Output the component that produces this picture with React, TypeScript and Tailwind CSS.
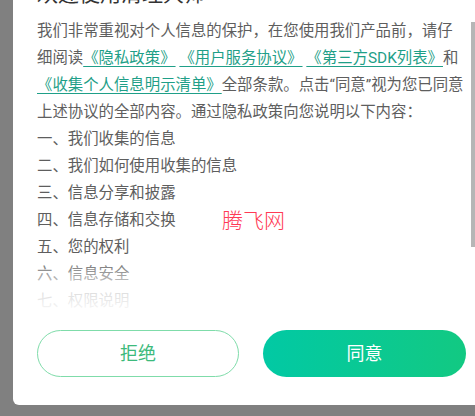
import React from "react";

const link = "text-[#1f9f88] underline decoration-[#1f9f88] underline-offset-[3px]";

export default function App() {
  const items = [
    "一、我们收集的信息",
    "二、我们如何使用收集的信息",
    "三、信息分享和披露",
    "四、信息存储和交换",
    "五、您的权利",
    "六、信息安全",
    "七、权限说明",
  ];
  return (
    <div
      className="w-[475px] h-[416px] bg-[#808080] overflow-hidden"
      style={{ fontFamily: 'Roboto, "Noto Sans CJK SC", sans-serif' }}
    >
      <div className="relative ml-[13px] w-[480px] h-[405px] bg-white rounded-bl-[6px] flex flex-col">
        <div className="relative h-[316px] overflow-hidden pl-[24px]">
          <div className="-mt-[20px] text-[21px] leading-[28px] text-[#333333] whitespace-nowrap">
            欢迎使用清理大师
          </div>
          <div className="mt-[10px] text-[15.4px] leading-[27px] text-[#5e5e5e] whitespace-nowrap">
            <div>我们非常重视对个人信息的保护，在您使用我们产品前，请仔</div>
            <div>
              细阅读<span className={link}>《隐私政策》</span> <span className={link}>《用户服务协议》</span>{" "}
              <span className={link}>《第三方SDK列表》</span>和
            </div>
            <div>
              <span className={link}>《收集个人信息明示清单》</span>全部条款。点击“同意”视为您已同意
            </div>
            <div>上述协议的全部内容。通过隐私政策向您说明以下内容：</div>
            {items.map((t) => (
              <div key={t}>{t}</div>
            ))}
          </div>
          <div className="absolute left-0 right-0 top-[258px] h-[58px] bg-gradient-to-b from-white/0 via-white/75 to-white" />
        </div>
        <div className="absolute left-[209px] top-[211px] text-[21px] leading-none font-light text-[#ff3a55] whitespace-nowrap">
          腾飞网
        </div>
        <div className="absolute left-[458px] top-[22px] w-[4px] h-[225px] bg-[#b6b6b6]" />
        <div className="mt-[14px] flex pl-[24px] gap-[24px]">
          <div className="w-[202px] h-[47px] rounded-full border border-[#7fdcaa] flex items-center justify-center text-[18px] text-[#3dba7c]">
            拒绝
          </div>
          <div className="w-[203px] h-[47px] rounded-full bg-gradient-to-r from-[#02c9a4] to-[#12c982] flex items-center justify-center text-[18px] text-white">
            同意
          </div>
        </div>
      </div>
    </div>
  );
}
